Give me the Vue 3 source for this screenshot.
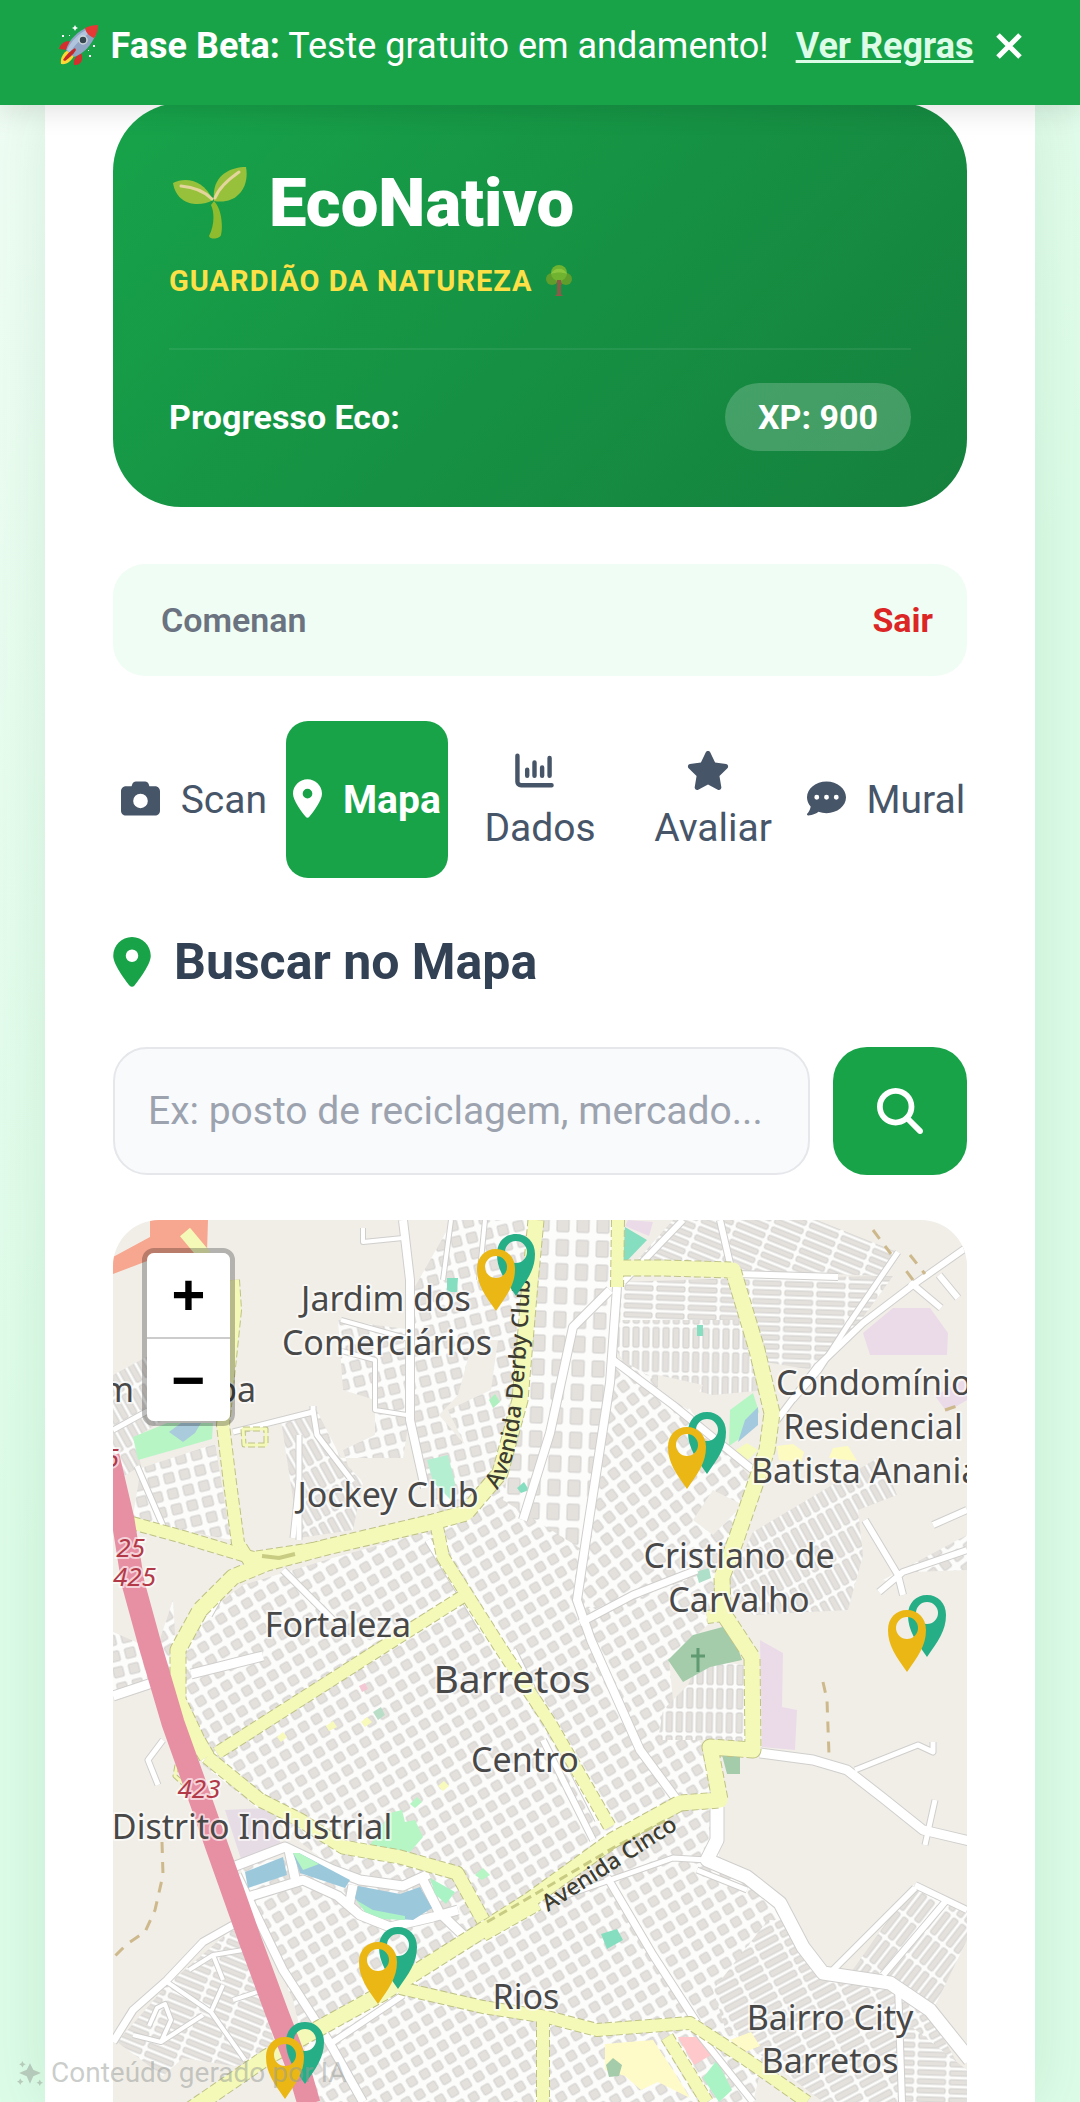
<template>
  <div class="page">
    <!-- aviso da fase beta -->
    <div v-if="showBanner" class="beta-banner">
      <svg class="rocket" viewBox="0 0 40 42" aria-hidden="true">
        <path d="M3 39C2 33 5 28 10 25L16 31C13 36 9 40 3 39Z" fill="#fdd835" />
        <path d="M1 24C3 17 9 15 14 17L9 25Z" fill="#d32f2f" />
        <path d="M16 40C15 34 18 31 23 28C26 34 23 41 16 40Z" fill="#d32f2f" />
        <path d="M8 25C11 15 20 5 31 2L38 9C34 19 26 29 16 32Z" fill="#90a4c4" />
        <path d="M9 25C13 16 21 8 30 4L33 7C24 13 16 20 12 28Z" fill="#b0c4de" />
        <path d="M27 3C31 1 35 0 40 0C40 5 39 9 36 13C31 11 28 8 27 3Z" fill="#e53935" />
        <circle cx="25" cy="15" r="4" fill="#37474f" stroke="#cfd8dc" stroke-width="1.5" />
        <path d="M5 35C8 30 12 26 17 23L18 25C15 30 11 33 7 36Z" fill="#c62828" />
        <path d="M17 0l1 2 2 1-2 1-1 2-1-2-2-1 2-1zM4 10h2v2H4zM11 10h1v1h-1zM35 20h2v2h-2zM30 25h1v1h-1zM31 30h2v2h-2z" fill="#fff" />
      </svg>
      <p><strong>Fase Beta:</strong> Teste gratuito em andamento!</p>
      <a href="#regras">Ver Regras</a>
      <button class="banner-close" aria-label="Fechar aviso" @click="showBanner = false">
        <svg viewBox="0 0 28 28"><path d="M3 3L25 25M25 3L3 25" /></svg>
      </button>
    </div>

    <main class="container">
      <header class="hero">
        <h1>
          <svg class="sprout" viewBox="0 0 74 72" aria-hidden="true">
            <path d="M41 34C49 42 50 60 48 68C47 72 37 73 36 69C41 60 42 46 38 38Z" fill="#8fbc2e" />
            <path d="M0 16C12 10 30 12 40 33C28 40 4 40 0 16Z" fill="#97c13a" />
            <path d="M73 0C58 0 38 8 41 34C62 38 77 22 73 0Z" fill="#97c13a" />
            <path d="M8 19C20 20 32 25 39 32M66 5C56 12 46 20 42 31" stroke="#e3d59b" stroke-width="3" fill="none" stroke-linecap="round" />
          </svg>
          EcoNativo
        </h1>
        <p class="rank">
          Guardião da Natureza
          <svg class="tree" viewBox="0 0 28 32" aria-hidden="true">
            <path d="M12 18L6 14L8 13L13 17V12H15V17L20 13L22 14L16 20V29L18 31H10L12 29Z" fill="#8d5a4a" />
            <circle cx="7" cy="14" r="6" fill="#5f9e2c" />
            <circle cx="21" cy="14" r="6" fill="#5f9e2c" />
            <circle cx="14" cy="8" r="8" fill="#6fb331" />
            <path d="M6 9C9 2 19 2 22 9C17 7 11 7 6 9Z" fill="#8ac73e" />
            <path d="M12 15h4v12h-4z" fill="#8d5a4a" />
          </svg>
        </p>
        <div class="progress">
          <span>Progresso Eco:</span>
          <span class="xp">XP: {{ xp }}</span>
        </div>
      </header>

      <div class="user-bar">
        <span class="user-name">{{ userName }}</span>
        <button class="logout">Sair</button>
      </div>

      <nav class="tabs">
        <button
          v-for="tab in tabs"
          :key="tab.id"
          class="tab"
          :class="{ active: activeTab === tab.id }"
          @click="activeTab = tab.id"
        >
          <svg class="tab-icon" :viewBox="tab.viewBox" :class="tab.id">
            <path v-if="tab.id !== 'dados'" :d="tab.icon" fill="currentColor" fill-rule="evenodd" />
            <path v-else :d="tab.icon" fill="none" stroke="currentColor" stroke-width="58" stroke-linecap="round" />
          </svg>
          {{ tab.label }}
        </button>
      </nav>

      <h2>
        <svg class="heading-pin" viewBox="0 0 384 512" aria-hidden="true">
          <path :d="pinIcon" fill="currentColor" fill-rule="evenodd" />
        </svg>
        Buscar no Mapa
      </h2>

      <form class="search" @submit.prevent>
        <input
          v-model="query"
          type="text"
          aria-label="Buscar no mapa"
          placeholder="Ex: posto de reciclagem, mercado..."
        />
        <button type="submit" aria-label="Buscar">
          <svg viewBox="0 0 512 512">
            <path
              fill="currentColor"
              d="M416 208c0 45.9-14.9 88.3-40 122.7L502.6 457.4c12.5 12.5 12.5 32.8 0 45.3s-32.8 12.5-45.3 0L330.7 376c-34.4 25.2-76.8 40-122.7 40C93.1 416 0 322.9 0 208S93.1 0 208 0S416 93.1 416 208zM208 352a144 144 0 1 0 0-288 144 144 0 1 0 0 288z"
            />
          </svg>
        </button>
      </form>

      <section class="map" aria-label="Mapa de Barretos">
        <svg class="map-canvas" viewBox="0 0 854 882" preserveAspectRatio="xMidYMin slice">
          <defs>
            <!-- quarteirões -->
            <pattern
              v-for="p in patterns"
              :id="p.id"
              :key="p.id"
              :width="p.w"
              :height="p.h"
              patternUnits="userSpaceOnUse"
              :patternTransform="'rotate(' + p.angle + ')'"
            >
              <rect :width="p.w" :height="p.h" fill="#fcfcfb" />
              <rect :x="p.gap" :y="p.gap" :width="p.w - 2 * p.gap" :height="p.h - 2 * p.gap" rx="1" fill="#e4e1dd" stroke="#d0cfcd" />
            </pattern>
            <path id="derby" d="M384 270C402 246 406 210 409 180C413 140 415 100 418 40" />
            <path id="cinco" d="M435 692L563 610" />
          </defs>

          <rect width="854" height="882" fill="#f1eee8" />
          <polygon v-for="(a, i) in blocks" :key="'b' + i" :points="a.points" :fill="'url(#' + a.fill + ')'" />
          <polygon v-for="(a, i) in areas" :key="'a' + i" :points="a.points" :fill="a.fill" />

          <!-- ruas brancas -->
          <g class="streets">
            <path v-for="(r, i) in streets" :key="'sc' + i" :d="r.d" :stroke-width="r.w + 2" stroke="#d0cfcd" />
            <path v-for="(r, i) in streets" :key="'s' + i" :d="r.d" :stroke-width="r.w" stroke="#fff" />
          </g>
          <!-- lagos e margens -->
          <polygon v-for="(a, i) in lakes" :key="'w' + i" :points="a.points" :fill="a.fill" />
          <!-- trilhas -->
          <path
            class="trail"
            d="M49 622L50 655L42 690L32 712L14 724L0 738M710 462L714 480L716 535M760 10L778 34M797 35L812 54M800 60L788 44M832 190L850 184"
          />
          <!-- avenidas -->
          <g class="streets">
            <path v-for="(r, i) in avenues" :key="'vc' + i" :d="r.d" :stroke-width="r.w + 2" stroke="#bfc284" stroke-dasharray="7 3" stroke-linecap="butt" />
            <path v-for="(r, i) in avenues" :key="'v' + i" :d="r.d" :stroke-width="r.w" stroke="#f4f9b8" />
          </g>
          <path d="M374 702L424 673L500 628L553 600" fill="none" stroke="#c8cb82" stroke-width="3" stroke-dasharray="9 5" />
          <path d="M149 336L166 338L182 334" fill="none" stroke="#c8cb82" stroke-width="4" />
          <!-- rodovia -->
          <path class="highway" d="M-5 236L10 300L20 363L37 425L60 503L90 587L104 627L137 720L164 793L187 853L196 884" />
          <polygon points="0,37 37,17 37,0 95,0 94,32 50,35 0,54" fill="#f7a68f" />
          <path d="M72 12L92 36" stroke="#f4f9b8" stroke-width="13" />
          <path d="M585 428v24M578 436h14" stroke="#5f9a70" stroke-width="3" />

          <g class="labels">
            <text
              v-for="(l, i) in labels"
              :key="'l' + i"
              :x="l.x"
              :y="l.y"
              :class="l.kind"
              :text-anchor="l.anchor || 'middle'"
            >{{ l.text }}</text>
            <text class="road"><textPath href="#derby">Avenida Derby Club</textPath></text>
            <text class="road"><textPath href="#cinco">Avenida Cinco</textPath></text>
          </g>

          <!-- pontos de coleta -->
          <g v-for="(m, i) in markers" :key="'m' + i" :transform="'translate(' + m.x + ' ' + m.y + ')'">
            <path transform="translate(20 -15)" :d="markerPath" fill="#26ae86" fill-rule="evenodd" />
            <path :d="markerPath" fill="#eab715" fill-rule="evenodd" />
          </g>
        </svg>

        <div class="zoom-control">
          <button aria-label="Aumentar zoom">+</button>
          <button aria-label="Diminuir zoom">−</button>
        </div>
      </section>
    </main>

    <div class="ai-note">
      <svg viewBox="0 0 24 24" aria-hidden="true">
        <path d="M12 3L15 9L22 12L15 15L12 22L9 15L2 12L9 9Z" />
        <path d="M5 1l1 2 2 1-2 1-1 2-1-2-2-1 2-1zM3 17l1 2 2 1-2 1-1 2-1-2-2-1 2-1zM21 18l1 2 2 1-2 1-1 2-1-2-2-1 2-1z" />
      </svg>
      Conteúdo gerado por IA
    </div>
  </div>
</template>

<script setup>
import { ref } from "vue";

const showBanner = ref(true);
const xp = ref(900);
const userName = ref("Comenan");
const activeTab = ref("mapa");
const query = ref("");

const pinIcon =
  "M215.7 499.2C267 435 384 279.4 384 192C384 86 298 0 192 0S0 86 0 192c0 87.4 117 243 168.3 307.2c12.3 15.3 35.1 15.3 47.4 0zM192 128a64 64 0 1 1 0 128 64 64 0 1 1 0-128z";

const tabs = [
  {
    id: "scan",
    label: "Scan",
    viewBox: "0 0 512 512",
    icon: "M149.1 64.8L138.7 96H64C28.7 96 0 124.7 0 160V416c0 35.3 28.7 64 64 64H448c35.3 0 64-28.7 64-64V160c0-35.3-28.7-64-64-64H373.3L362.9 64.8C356.4 45.2 338.1 32 317.4 32H194.6c-20.7 0-39 13.2-45.5 32.8zM256 192a96 96 0 1 1 0 192 96 96 0 1 1 0-192z",
  },
  { id: "mapa", label: "Mapa", viewBox: "0 0 384 512", icon: pinIcon },
  {
    id: "dados",
    label: "Dados",
    viewBox: "0 0 512 512",
    icon: "M32 62V400A48 48 0 0 0 80 450H480M160 245V325M256 150V325M356 215V325M454 92V325",
  },
  {
    id: "avaliar",
    label: "Avaliar",
    viewBox: "0 0 576 512",
    icon: "M316.9 18C311.6 7 300.4 0 288.1 0s-23.4 7-28.8 18L195 150.3 51.4 171.5c-12 1.8-22 10.2-25.7 21.7s-.7 24.2 7.9 32.7L137.8 329 113.2 474.7c-2 12 3 24.2 12.9 31.3s23 8 33.8 2.3l128.3-68.5 128.3 68.5c10.8 5.7 23.9 4.9 33.8-2.3s14.9-19.3 12.9-31.3L438.5 329 542.7 225.9c8.6-8.5 11.7-21.2 7.9-32.7s-13.7-19.9-25.7-21.7L381.2 150.3 316.9 18z",
  },
  {
    id: "mural",
    label: "Mural",
    viewBox: "0 0 512 512",
    icon: "M256 448c141.4 0 256-93.1 256-208S397.4 32 256 32S0 125.1 0 240c0 45.1 17.7 86.8 47.7 120.9c-1.9 24.5-11.4 46.3-21.4 62.9c-5.5 9.2-11.1 16.6-15.2 21.6c-2.1 2.5-3.7 4.4-4.9 5.7l-1.6 1.7c-4.6 4.6-5.9 11.4-3.4 17.4c2.5 6 8.3 9.9 14.8 9.9c28.7 0 57.6-8.9 81.6-19.3c22.9-10 42.4-21.9 54.3-30.6c31.8 11.5 67 17.9 104.1 17.9zM128 208a32 32 0 1 1 0 64 32 32 0 1 1 0-64zm128 0a32 32 0 1 1 0 64 32 32 0 1 1 0-64zm96 32a32 32 0 1 1 64 0 32 32 0 1 1 -64 0z",
  },
];

// padrões de quarteirão
const patterns = [
  { id: "grid", w: 15, h: 15, gap: 3, angle: -31 },
  { id: "gridNorth", w: 16, h: 16, gap: 3, angle: -14 },
  { id: "gridEast", w: 15, h: 16, gap: 3, angle: -37 },
  { id: "gridTall", w: 20, h: 24, gap: 4, angle: 2 },
  { id: "rows", w: 32, h: 9, gap: 2, angle: 2 },
  { id: "rowsTilt", w: 34, h: 9, gap: 2, angle: 22 },
  { id: "cols", w: 10, h: 24, gap: 2, angle: 1 },
  { id: "colsTilt", w: 10, h: 26, gap: 2, angle: -29 },
  { id: "rowsSouth", w: 28, h: 10, gap: 2, angle: -28 },
  { id: "colsSouth", w: 10, h: 30, gap: 2, angle: 38 },
];

const blocks = [
  { fill: "grid", points: "66,445 90,395 130,365 220,338 320,310 395,262 430,190 480,170 560,290 612,350 600,400 556,440 560,480 592,530 600,580 606,636 660,680 700,745 660,800 640,882 205,882 180,780 140,690 125,640 210,640 90,545" },
  { fill: "gridTall", points: "428,0 503,0 505,70 495,180 470,330 390,280 410,180 418,90" },
  { fill: "rows", points: "505,62 628,58 780,56 735,118 700,150 640,140 640,100 508,100" },
  { fill: "rowsTilt", points: "520,45 560,0 704,0 784,32 768,56 620,50" },
  { fill: "cols", points: "506,100 640,100 648,135 655,170 600,175 520,155 503,130" },
  { fill: "gridEast", points: "500,135 560,170 640,260 630,310 600,350 520,380 465,390 475,310" },
  { fill: "colsTilt", points: "640,312 768,236 784,275 745,290 750,335 735,390 640,395 612,370" },
  { fill: "gridNorth", points: "296,60 300,110 225,100 230,170 262,180 262,215 230,230 240,262 225,290 190,318 178,195 200,190 202,187 228,238 290,238 296,200 306,240 330,300 395,240 408,180 418,100 424,0 340,0 300,70" },
  { fill: "colsTilt", points: "168,200 200,192 205,215 250,262 240,310 186,318" },
  { fill: "gridNorth", points: "28,248 102,224 118,320 58,308 20,296" },
  { fill: "colsTilt", points: "0,155 50,128 50,200 22,218 28,246 0,262" },
  { fill: "rowsTilt", points: "4,822 54,765 118,710 136,712 165,840 120,846 70,838 50,856" },
  { fill: "grid", points: "45,425 60,380 66,480 74,500" },
  { fill: "gridNorth", points: "0,412 30,425 40,466 0,474" },
  { fill: "cols", points: "585,440 632,445 632,525 598,520 545,520 550,490 575,465" },
  { fill: "rowsSouth", points: "655,700 676,700 704,755 780,770 820,800 854,860 854,882 710,882 612,808 600,770" },
  { fill: "colsSouth", points: "800,665 854,690 854,720 820,790 780,762 736,755" },
  { fill: "rows", points: "790,800 854,850 854,882 790,882" },
  { fill: "gridEast", points: "770,360 854,315 854,350 800,352 778,362" },
];

const areas = [
  { fill: "#f1eee8", points: "360,120 385,120 378,170 335,190 352,225 326,195 345,175" },
  { fill: "#f1eee8", points: "545,155 590,165 575,190 545,170" },
  { fill: "#f1eee8", points: "600,270 630,285 600,315 580,300" },
  { fill: "#ebdbe9", points: "750,113 780,88 817,88 835,113 834,135 757,135" },
  { fill: "#ebdbe9", points: "647,420 670,433 669,487 684,490 682,530 649,527" },
  { fill: "#ebdbe9", points: "822,176 854,158 854,180 834,192" },
  { fill: "#e5dce5", points: "112,590 155,588 170,630 130,645" },
  { fill: "#ebdbe9", points: "515,0 540,2 536,16 512,6" },
  { fill: "#86dec0", points: "512,7 534,20 510,45" },
  { fill: "#a4cbaa", points: "555,440 580,415 617,405 629,440 597,447 570,462" },
  { fill: "#a4cbaa", points: "609,535 627,535 627,554 614,554" },
  { fill: "#b8f5c5", points: "20,217 54,203 100,203 99,219 25,240" },
  { fill: "#a9cbdc", points: "56,212 68,203 88,203 82,213 70,222" },
  { fill: "#b3efd0", points: "314,240 335,235 342,263 340,282 320,262" },
  { fill: "#86dec0", points: "334,58 345,58 344,72 334,72" },
  { fill: "#b0efbf", points: "376,180 382,174 387,182 380,188" },
  { fill: "#86dec0", points: "404,268 411,262 416,270 408,273" },
  { fill: "#b5f6c4", points: "617,190 640,173 646,192 632,215 616,226" },
  { fill: "#a3c9de", points: "632,200 645,187 645,205 625,222" },
  { fill: "#f6fabb", points: "620,232 634,223 645,230 633,242" },
  { fill: "#fdfbc0", points: "664,226 680,224 691,232 688,242 666,240" },
  { fill: "#fdfbc0", points: "720,228 735,226 744,241 716,238" },
  { fill: "#86dec0", points: "584,105 590,105 590,116 584,116" },
  { fill: "#aedfc9", points: "583,352 596,348 598,358 586,363" },
  { fill: "#b5f6c4", points: "277,593 289,590 292,602 302,600 310,617 297,632 257,625" },
  { fill: "#b5f6c4", points: "297,584 304,577 309,582 302,588" },
  { fill: "#b5f6c4", points: "362,655 370,648 377,655 369,660" },
  { fill: "#b9dec8", points: "260,492 268,487 272,495 265,500" },
  { fill: "#f4c7d4", points: "246,466 252,463 255,469 249,472" },
  { fill: "#f8fabb", points: "164,517 170,512 174,517 168,522" },
  { fill: "#f8fabb", points: "213,506 220,501 224,507 216,511" },
  { fill: "#f8fabb", points: "248,502 254,497 259,502 252,507" },
  { fill: "#f8fabb", points: "325,566 331,561 336,566 330,571" },
  { fill: "#86dec0", points: "488,714 504,709 510,720 494,729" },
  { fill: "#fffbc9", points: "492,824 540,820 560,850 577,878 545,862 528,870 512,856 492,850" },
  { fill: "#a4cbaa", points: "493,845 500,838 509,845 506,856 496,857" },
  { fill: "#ffc9cc", points: "565,817 587,817 598,835 581,845" },
  { fill: "#a9f3c4", points: "590,858 604,840 619,870 606,882" },
  { fill: "#fffbc9", points: "617,820 638,812 647,826 632,832" },
];

const lakes = [
  { fill: "#9cc8dc", points: "132,652 170,637 174,655 135,668" },
  { fill: "#9cc8dc", points: "180,633 186,633 237,660 232,668 187,653" },
  { fill: "#b5f6c4", points: "180,633 186,633 206,644 190,650" },
  { fill: "#9cc8dc", points: "245,666 287,674 307,667 319,688 300,700 270,698 252,690 242,678" },
  { fill: "#a9f3c4", points: "243,680 260,690 292,696 292,700 270,699 252,692" },
  { fill: "#a9f3c4", points: "317,658 342,672 333,684 322,674" },
];

const streets = [
  { w: 8, d: "M290 0L297 60L297 200L312 268" },
  { w: 4, d: "M250 8V22L290 18M338 0L330 60M372 0L366 60M228 100L300 120M225 130L262 140V190L300 196" },
  { w: 8, d: "M504 67L497 163L474 313L464 380L478 420L527 530L564 580" },
  { w: 8, d: "M497 70L460 107L437 213L410 300" },
  { w: 6, d: "M510 62L570 0M607 0L618 48M622 54L725 57" },
  { w: 5, d: "M785 32L735 105L706 150L680 180" },
  { w: 7, d: "M500 140L560 185L640 250M467 403L520 375L584 350" },
  { w: 6, d: "M854 27L800 65L750 103L704 147L664 200" },
  { w: 6, d: "M797 62L828 88M826 55L845 78" },
  { w: 6, d: "M752 300L785 355L790 375M854 290L820 305M766 372L790 352L854 330" },
  { w: 9, d: "M647 533L700 540L734 550L770 578L810 610L857 621" },
  { w: 5, d: "M742 550L805 525L820 532V522M822 580L812 625" },
  { w: 13, d: "M604 587V620L594 640L634 657L667 683L690 727L710 753L777 763L817 790L857 840" },
  { w: 5, d: "M594 640L560 638L440 680M584 650L634 670" },
  { w: 6, d: "M802 665L854 690M832 682L770 755M802 668L715 755M785 765L789 882" },
  { w: 7, d: "M494 657L540 735L584 803" },
  { w: 6, d: "M400 430L437 505L485 600M430 520L480 620" },
  { w: 6, d: "M315 320L370 410M170 350L220 400M96 395L110 370" },
  { w: 9, d: "M0 476L42 462M78 454L150 436" },
  { w: 9, d: "M112 650L172 627L220 650L247 660L290 666L316 654M135 677L190 660L225 676L247 695L277 707L320 697L345 690M176 630L182 658M240 665L236 686M310 660L326 692L350 715" },
  { w: 8, d: "M124 655L170 750L215 820L250 882" },
  { w: 7, d: "M0 822L20 790L54 760L90 722L120 705" },
  { w: 4, d: "M54 762L98 792L132 840M98 792L110 765M36 806L44 788L52 784L58 800L48 822L20 815M48 822L90 795M76 750L100 735L110 760M100 735L130 730M120 780L150 770" },
  { w: 6, d: "M220 822L290 775M584 812L640 882" },
  { w: 5, d: "M120 212L200 192V186M200 190L204 215L240 262M186 215V320M12 300L25 355M50 520L35 540L45 565" },
  { w: 5, d: "M0 210L40 188M24 246L50 306M180 318L186 260" },
];

const avenues = [
  { w: 15, d: "M423 0L417 63L407 180L387 253L353 293L320 302L214 327L154 343L120 357L87 390L65 430L65 480L84 520L94 537" },
  { w: 12, d: "M120 60L122 90L110 205L117 263L125 323L137 342" },
  { w: 12, d: "M19 303L70 317L140 338L214 327" },
  { w: 12, d: "M324 307L330 337L387 427L437 503L497 607" },
  { w: 12, d: "M349 377L270 427L104 533" },
  { w: 13, d: "M94 537L147 580L187 600L230 627L287 637L344 653L370 700" },
  { w: 15, d: "M77 890L154 837L270 773L370 710L417 680L500 620L567 583L607 580L597 527L640 530L639 437L610 393L609 357L624 317L654 230L659 193L644 130L620 50L550 48L505 48" },
  { w: 12, d: "M505 0L504 67M610 395L594 397M370 715L425 684" },
  { w: 12, d: "M287 768L370 787L434 797L484 810L577 803L634 840L694 882" },
  { w: 12, d: "M430 800V882M554 817L594 882" },
  { w: 3, d: "M130 209H153V225H131ZM64 545L62 556L72 565" },
];

const labels = [
  { text: "Jardim dos", x: 273, y: 91 },
  { text: "Comerciários", x: 274, y: 135 },
  { text: "m", x: 21, y: 182, anchor: "end" },
  { text: "pa", x: 143, y: 182, anchor: "end" },
  { text: "Jockey Club", x: 275, y: 287 },
  { text: "Fortaleza", x: 225, y: 417 },
  { text: "Barretos", x: 399, y: 473, kind: "city" },
  { text: "Centro", x: 412, y: 552 },
  { text: "Distrito Industrial", x: 139, y: 619 },
  { text: "Rios", x: 413, y: 789 },
  { text: "Bairro City", x: 717, y: 810 },
  { text: "Barretos", x: 717, y: 853 },
  { text: "Condomínio", x: 663, y: 175, anchor: "start" },
  { text: "Residencial", x: 760, y: 219 },
  { text: "Batista Anania", x: 638, y: 263, anchor: "start" },
  { text: "Cristiano de", x: 626, y: 348 },
  { text: "Carvalho", x: 626, y: 392 },
  { text: "5", x: 6, y: 247, anchor: "end", kind: "ref" },
  { text: "25", x: 32, y: 337, anchor: "end", kind: "ref" },
  { text: "425", x: 43, y: 366, anchor: "end", kind: "ref" },
  { text: "423", x: 86, y: 578, kind: "ref" },
];

const markerPath =
  "M19 0C8 0 0 8 0 20C0 36 8 46 19 62C30 46 38 36 38 20C38 8 30 0 19 0ZM19 7A11 11 0 1 1 19 29A11 11 0 1 1 19 7Z";

const markers = [
  { x: 364, y: 29 },
  { x: 555, y: 207 },
  { x: 775, y: 390 },
  { x: 246, y: 722 },
  { x: 153, y: 817 },
];
</script>

<style>
body {
  margin: 0;
}
</style>

<style scoped>
* {
  box-sizing: border-box;
}

.page {
  position: relative;
  display: flex;
  flex-direction: column;
  height: 100vh;
  overflow: hidden;
  background: linear-gradient(135deg, #f0fdf4, #dcfce7 50%, #dcfce7);
  font-family: Roboto, "Liberation Sans", sans-serif;
  color: #334155;
}

button {
  border: none;
  padding: 0;
  background: none;
  font-family: inherit;
  cursor: pointer;
}

h1,
h2,
p {
  margin: 0;
}

/* faixa superior */
.beta-banner {
  position: relative;
  z-index: 2;
  flex: none;
  display: flex;
  justify-content: center;
  align-items: center;
  height: 105px;
  padding-bottom: 14px;
  background: #18a349;
  color: #fff;
  font-size: 36px;
  line-height: 48px;
  box-shadow: 0 8px 24px rgba(0, 0, 0, 0.1);
}

.rocket {
  width: 42px;
  height: 42px;
  margin-right: 12px;
}

.beta-banner a {
  margin-left: 27px;
  color: #dcfce7;
  font-weight: 700;
}

.banner-close {
  display: flex;
  margin-left: 22px;
  color: #fff;
}

.banner-close svg {
  width: 28px;
  height: 28px;
  fill: none;
  stroke: currentColor;
  stroke-width: 5;
}

.container {
  flex: 1;
  display: flex;
  flex-direction: column;
  min-height: 0;
  margin: 0 45px;
  padding: 0 68px;
  background: #fff;
  box-shadow: 0 0 56px rgba(22, 101, 52, 0.1);
}

/* cartão principal */
.hero {
  margin-top: -2px;
  padding: 56px;
  border-radius: 68px;
  background: linear-gradient(135deg, #17a34a, #15803d);
  color: #fff;
}

h1 {
  display: flex;
  align-items: center;
  gap: 22px;
  height: 88px;
  font-size: 67px;
  font-weight: 900;
}

.sprout {
  width: 74px;
  height: 72px;
  margin-left: 4px;
}

.rank {
  display: flex;
  align-items: center;
  gap: 12px;
  height: 68px;
  color: #fde047;
  font-size: 29px;
  font-weight: 700;
  letter-spacing: 1px;
  text-transform: uppercase;
}

.tree {
  width: 28px;
  height: 32px;
}

.progress {
  display: flex;
  justify-content: space-between;
  align-items: center;
  margin-top: 33px;
  padding-top: 33px;
  border-top: 2px solid rgba(255, 255, 255, 0.07);
  font-size: 34px;
  font-weight: 700;
}

.xp {
  padding: 0 33px;
  border-radius: 34px;
  background: rgba(255, 255, 255, 0.2);
  line-height: 68px;
}

.user-bar {
  display: flex;
  justify-content: space-between;
  align-items: center;
  height: 112px;
  margin-top: 57px;
  padding: 0 34px 0 48px;
  border-radius: 32px;
  background: #f0fdf4;
  font-size: 34px;
}

.user-name {
  color: #6b7280;
  font-weight: 600;
}

.logout {
  color: #dc2626;
  font-size: 34px;
  font-weight: 700;
}

/* abas */
.tabs {
  display: grid;
  grid-template-columns: repeat(5, 1fr);
  gap: 11px;
  margin-top: 45px;
}

.tab {
  min-height: 157px;
  border-radius: 22px;
  color: #475569;
  font-size: 39px;
  line-height: 56px;
}

.tab.active {
  background: #18a349;
  color: #fff;
  font-weight: 700;
}

.tab-icon {
  width: 39px;
  height: 39px;
  margin-right: 11px;
  vertical-align: -5px;
}

.tab-icon.mapa {
  width: 29px;
}

.tab-icon.avaliar {
  width: 44px;
}

h2 {
  display: flex;
  align-items: center;
  gap: 23px;
  height: 68px;
  margin-top: 50px;
  font-size: 50px;
  font-weight: 700;
}

.heading-pin {
  width: 38px;
  height: 50px;
  color: #18a349;
}

.search {
  display: flex;
  gap: 23px;
  margin-top: 51px;
}

.search input {
  flex: 1;
  min-width: 0;
  height: 128px;
  padding: 0 33px;
  border: 2px solid #e5e7eb;
  border-radius: 34px;
  background: #f8fafc;
  color: #334155;
  font-family: inherit;
  font-size: 39px;
}

.search input::placeholder {
  color: #9ca3af;
}

.search button {
  display: flex;
  justify-content: center;
  align-items: center;
  width: 134px;
  border-radius: 34px;
  background: #18a349;
  color: #fff;
}

.search button svg {
  width: 46px;
  height: 46px;
}

/* mapa */
.map {
  position: relative;
  flex: 1;
  min-height: 0;
  margin-top: 45px;
  overflow: hidden;
  border-radius: 46px 46px 0 0;
}

.map-canvas {
  display: block;
  width: 100%;
  height: 100%;
}

.streets path {
  fill: none;
  stroke-linejoin: round;
}

.trail {
  fill: none;
  stroke: #cdb98c;
  stroke-width: 3;
  stroke-dasharray: 11 9;
}

.highway {
  fill: none;
  stroke: #e78fa3;
  stroke-width: 23;
}

.labels {
  fill: #484848;
  stroke: rgba(255, 255, 255, 0.6);
  stroke-width: 4px;
  stroke-linejoin: round;
  paint-order: stroke;
  font-family: "Noto Sans", sans-serif;
  font-size: 34px;
}

.labels .city {
  font-size: 39px;
}

.labels .ref {
  fill: #b23a48;
  font-size: 26px;
  font-style: italic;
}

.labels .road {
  fill: #3c3c30;
  stroke: none;
  font-size: 23px;
  font-weight: 500;
}

.zoom-control {
  position: absolute;
  top: 28px;
  left: 29px;
  width: 93px;
  overflow: hidden;
  border: 5px solid rgba(0, 0, 0, 0.25);
  border-radius: 12px;
}

.zoom-control button {
  display: block;
  width: 100%;
  height: 84px;
  background: #fff;
  color: #000;
  font-family: "Liberation Sans", sans-serif;
  font-size: 58px;
  font-weight: 700;
  line-height: 78px;
}

.zoom-control button + button {
  border-top: 2px solid #ccc;
}

.ai-note {
  position: absolute;
  bottom: 12px;
  left: 17px;
  display: flex;
  align-items: center;
  gap: 8px;
  color: rgba(150, 155, 150, 0.5);
  font-size: 28px;
  line-height: 34px;
}

.ai-note svg {
  width: 26px;
  height: 26px;
  fill: currentColor;
}
</style>
